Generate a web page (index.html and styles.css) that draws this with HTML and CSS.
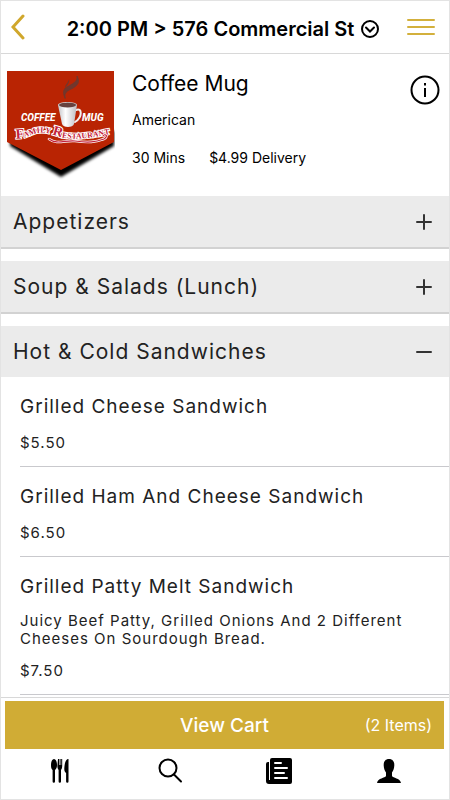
FILE: index.html
```html
<!DOCTYPE html>
<html lang="en">
<head>
<meta charset="utf-8">
<meta name="viewport" content="width=device-width, initial-scale=1">
<title>Coffee Mug</title>
<link rel="stylesheet" href="styles.css">
</head>
<body>
  <header class="topbar">
    <button class="icon-btn" aria-label="Back">
      <svg class="back" width="14" height="26" viewBox="0 0 14 26"><path d="M12 2 2 13l10 11"/></svg>
    </button>
    <button class="where">
      <span>2:00 PM &gt; 576 Commercial St</span>
      <svg width="18" height="18" viewBox="0 0 18 18"><circle cx="9" cy="9" r="8"/><path d="M5 7.500l4 4 4-4"/></svg>
    </button>
    <button class="icon-btn" aria-label="Menu">
      <svg class="burger" width="28" height="18" viewBox="0 0 28 18"><path d="M1 2h26M1 9h26M1 16h26"/></svg>
    </button>
  </header>

  <main>
    <section class="place">
      <svg class="logo" width="108" height="112" viewBox="0 0 108 112" role="img" aria-label="Coffee Mug Family Restaurant">
        <defs>
          <filter id="soft" x="-10%" y="-10%" width="120%" height="130%"><feGaussianBlur stdDeviation="1.800"/></filter>
          <linearGradient id="cup"><stop offset="0" stop-color="#c4c4c8"/><stop offset=".4" stop-color="#fff"/><stop offset="1" stop-color="#bdbdc2"/></linearGradient>
          <path id="wave" d="M9 67C16 69 22 64 30 62C40 60 46 65 58 67C72 69 84 67 108 62"/>
        </defs>
        <path d="M3 60H107V75L54 106 3 75z" filter="url(#soft)"/>
        <path d="M0 0H107V71L54 99 0 71z" fill="#b92403"/>
        <path d="M58 27C55 20 57 17 62 15C67 12 71 10 70 5C73 11 71 14 66 17C60 20 57 21 58 27z" fill="#70372d" stroke="#70372d"/>
        <path d="M58 17C58 13 62 11 62 8C63 12 60 14 58 17z" fill="#70372d"/>
        <path d="M69 39C75 36 76 46 68 51" fill="none" stroke="#f3eeee" stroke-width="2"/>
        <path d="M51 34C51 30 70 30 70 34L67 53C66 57 56 57 55 53z" fill="url(#cup)"/>
        <ellipse cx="60.500" cy="34" rx="8.500" ry="2.600" fill="#67423e"/>
        <text class="logo-name" x="14" y="50">COFFEE</text>
        <text class="logo-name" x="75" y="50">MUG</text>
        <text class="logo-sub"><textPath href="#wave"><tspan class="cap">F</tspan>AMILY <tspan class="cap">R</tspan>ESTAURANT</textPath></text>
        <path d="M42 68C50 74 58 69 68 70C82 72 88 71 97 68C102 65 98 62 96 65" fill="none" stroke="#fff" stroke-width="2.600"/>
        <path d="M42 68C50 74 58 69 68 70C82 72 88 71 97 68C102 65 98 62 96 65" fill="none" stroke="#c3213c" stroke-width="1.200"/>
      </svg>
      <div class="place-text">
        <h1>Coffee Mug</h1>
        <p>American</p>
        <p class="delivery"><span>30 Mins</span><span>$4.99 Delivery</span></p>
      </div>
      <button class="icon-btn info" aria-label="Restaurant info">
        <svg width="30" height="30" viewBox="0 0 30 30"><circle cx="15" cy="15" r="13.500"/><path d="M15 13v9M15 8v2.500"/></svg>
      </button>
    </section>

    <section class="group">
      <h2><button aria-expanded="false">Appetizers
        <svg width="16" height="16" viewBox="0 0 16 16"><path d="M1 8h14M8 1v14"/></svg></button></h2>
    </section>
    <section class="group">
      <h2><button aria-expanded="false">Soup &amp; Salads (Lunch)
        <svg width="16" height="16" viewBox="0 0 16 16"><path d="M1 8h14M8 1v14"/></svg></button></h2>
    </section>
    <section class="group open">
      <h2><button aria-expanded="true">Hot &amp; Cold Sandwiches
        <svg width="16" height="16" viewBox="0 0 16 16"><path d="M1 8h14"/></svg></button></h2>
      <ul>
        <li>
          <h3>Grilled Cheese Sandwich</h3>
          <p>$5.50</p>
        </li>
        <li>
          <h3>Grilled Ham And Cheese Sandwich</h3>
          <p>$6.50</p>
        </li>
        <li>
          <h3>Grilled Patty Melt Sandwich</h3>
          <p class="about">Juicy Beef Patty, Grilled Onions And 2 Different Cheeses On Sourdough Bread.</p>
          <p>$7.50</p>
        </li>
      </ul>
    </section>
  </main>

  <footer>
    <button class="cart"><span class="label">View Cart</span><span class="count">(2 Items)</span></button>
    <nav>
      <a href="#menu" aria-label="Restaurants">
        <svg width="20" height="26" viewBox="0 0 20 26">
          <path d="M4 1C6 1 7 4 7 7 7 10 6 11 5 12V23.500a1.200 1.200 0 0 1-2.400 0V12C1.500 11 1 10 1 7 1 4 2 1 4 1z"/>
          <path d="M8 1h1v6h.6V1h1v6h.6V1h1v7c0 2-.6 3-1.200 4v11.500a1.200 1.200 0 0 1-2.400 0V12C8 11 7.400 10 7.400 8z"/>
          <path d="M18.500 1v22.500a1.200 1.200 0 0 1-2.400 0V15c-2-1-2-4-1.600-7C15 4 16 1 18.500 1z"/>
        </svg>
      </a>
      <a href="#search" aria-label="Search">
        <svg class="line" width="26" height="26" viewBox="0 0 26 26"><circle cx="11" cy="10" r="8.500"/><path d="M17 16.500l7 7"/></svg>
      </a>
      <a href="#orders" aria-label="Orders">
        <svg width="26" height="26" viewBox="0 0 26 26">
          <path d="M7 0H24a2 2 0 0 1 2 2V24a2 2 0 0 1-2 2H3a3 3 0 0 1-3-3V6a2 2 0 0 1 2-2h1V22h1V2a2 2 0 0 1 2-2z"/>
          <path class="rule" d="M9 5h6M9 10h12M9 15h9M9 20h12"/>
        </svg>
      </a>
      <a href="#account" aria-label="Account">
        <svg width="24" height="24" viewBox="0 0 24 24"><path d="M12 0C16 0 17.500 3 17.300 6.500 17.200 10 16 12 15 13.500V17C16 19 23 19 24 24H0C1 19 8 19 9 17V13.500C8 12 6.800 10 6.700 6.500 6.500 3 8 0 12 0z"/></svg>
      </a>
    </nav>
  </footer>
</body>
</html>
```
FILE: styles.css
```css
* { box-sizing: border-box; }
body { margin: 0; height: 100vh; display: flex; flex-direction: column; border: 1px solid #e3e3e3; background: #fff; color: #000; font-family: Inter, Roboto, "Liberation Sans", sans-serif; }
h1, h2, h3, p, ul { margin: 0; padding: 0; font-weight: 400; }
button { margin: 0; padding: 0; border: 0; background: none; color: inherit; font: inherit; cursor: pointer; }
svg { display: block; flex: none; }
svg path, svg circle { stroke-linecap: round; }

.topbar { flex: none; height: 53px; padding: 0 14px 0 10px; display: flex; align-items: center; justify-content: space-between; border-bottom: 1px solid #d8d8d8; }
.icon-btn { min-width: 28px; }
.back { fill: none; stroke: #d0a72c; stroke-width: 3; }
.burger { fill: none; stroke: #d3b03c; stroke-width: 2; }
.where { display: flex; align-items: center; gap: 7px; padding-top: 3px; font-size: 20px; font-weight: 600; white-space: nowrap; }
.where svg { fill: none; stroke: #000; stroke-width: 2; }

main { flex: 1; min-height: 0; overflow-y: auto; scrollbar-width: none; }

.place { display: flex; min-height: 142px; padding: 17px 9px 12px 6px; }
.place-text { flex: 1; padding-left: 17px; }
.place h1 { font-size: 21px; line-height: 26px; }
.place p { margin-top: 13px; font-size: 14px; line-height: 20px; }
.place p.delivery { margin-top: 18px; display: flex; gap: 24px; }
.info { align-self: flex-start; padding-top: 4px; }
.info svg { fill: none; stroke: #000; stroke-width: 2; }
.info path { stroke-linecap: butt; }
.logo-name { fill: #fff; font: italic 800 10px Roboto, sans-serif; }
.logo-sub { fill: #c3213c; stroke: #fff; stroke-width: 2px; paint-order: stroke; font: 700 8px "Liberation Serif", serif; }
.logo-sub .cap { font-size: 14px; }

.group { margin-bottom: 12px; }
.group h2 { border-bottom: 2px solid #d2d2d2; background: #ebebeb; }
.group h2 button { width: 100%; height: 51px; padding: 0 17px 0 12px; display: flex; align-items: center; justify-content: space-between; color: #222; font-size: 21px; letter-spacing: 1px; text-align: left; }
.group h2 svg { fill: none; stroke: #333; stroke-width: 2; }
.group.open { margin: 0; }
.group.open h2 { border: 0; }
.group ul { margin-left: 19px; list-style: none; }
.group li { padding: 17px 0 14px; border-bottom: 1px solid #c9c9cd; color: #222; letter-spacing: 1px; }
.group h3 { font-size: 19px; line-height: 26px; }
.group li p { margin-top: 14px; font-size: 15px; line-height: 18px; }
.group li p.about { margin-top: 12px; }

footer { flex: none; padding: 3px 5px 0 4px; border-top: 1px solid #d8d8d8; }
.cart { width: 100%; height: 48px; padding: 0 12px; display: grid; grid-template-columns: 1fr auto 1fr; align-items: center; background: #d0ac35; color: #fff; }
.cart .label { grid-column: 2; font-size: 19px; font-weight: 500; }
.cart .count { justify-self: end; font-size: 16px; }
nav { height: 50px; padding-bottom: 7px; display: grid; grid-template-columns: repeat(4, 1fr); align-items: center; justify-items: center; }
nav .line { fill: none; stroke: #000; stroke-width: 2; }
nav .rule { stroke: #fff; stroke-width: 2; }
```
